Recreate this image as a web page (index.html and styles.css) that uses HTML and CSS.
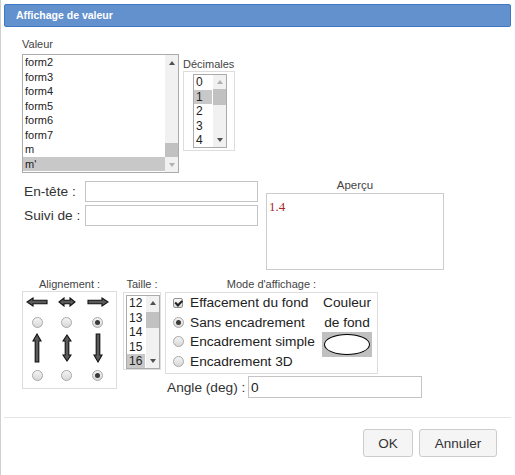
FILE: index.html
```html
<!DOCTYPE html>
<html>
  <head>
    <meta charset="utf-8">
    <title>Affichage de valeur</title>
    <link rel="stylesheet" href="styles.css">
  </head>

  <body>
    <div class="dialog">
      <!-- Title bar -->
      <div class="titlebar">Affichage de valeur</div>

      <div class="dialog-body">
        <!-- Value list + decimals -->
        <div class="row row-top">
          <div class="value-col">
            <div class="caption caption-left">Valeur</div>
            <div class="listbox value-list">
              <ul class="items">
                <li>form2</li>
                <li>form3</li>
                <li>form4</li>
                <li>form5</li>
                <li>form6</li>
                <li>form7</li>
                <li>m</li>
                <li class="selected">m'</li>
              </ul>
              <div class="scrollbar">
                <span class="arrow up"></span>
                <span class="track track-end"><span class="thumb"></span></span>
                <span class="arrow down faded"></span>
              </div>
            </div>
          </div>

          <div class="decimal-col">
            <div class="caption caption-left">Décimales</div>
            <div class="group decimal-box">
              <div class="listbox small-list decimal-list">
                <ul class="items">
                  <li>0</li>
                  <li class="selected">1</li>
                  <li>2</li>
                  <li>3</li>
                  <li>4</li>
                </ul>
                <div class="scrollbar">
                  <span class="arrow up faded"></span>
                  <span class="track"><span class="thumb"></span></span>
                  <span class="arrow down"></span>
                </div>
              </div>
            </div>
          </div>
        </div>

        <!-- Prefix / suffix + preview -->
        <div class="row row-text">
          <div class="fields">
            <div class="field">
              <label for="prefix">En-tête :</label>
              <input type="text" id="prefix">
            </div>
            <div class="field">
              <label for="suffix">Suivi de :</label>
              <input type="text" id="suffix">
            </div>
          </div>

          <div class="preview-col">
            <div class="caption">Aperçu</div>
            <div class="preview-box">
              <span class="preview-text">1.4</span>
            </div>
          </div>
        </div>

        <!-- Alignment, size, display mode -->
        <div class="row row-options">
          <div class="align-col">
            <div class="caption">Alignement :</div>
            <div class="group align-box">
              <div class="cell">
                <svg width="22" height="10" viewBox="0 0 22 10"><path class="arr" d="M1 5 L7 1 L7 3.2 L21 3.2 L21 6.8 L7 6.8 L7 9 Z"/></svg>
              </div>
              <div class="cell">
                <svg width="18" height="10" viewBox="0 0 18 10"><path class="arr" d="M1 5 L6 1 L6 3.2 L12 3.2 L12 1 L17 5 L12 9 L12 6.8 L6 6.8 L6 9 Z"/></svg>
              </div>
              <div class="cell">
                <svg width="22" height="10" viewBox="0 0 22 10"><path class="arr" d="M21 5 L15 1 L15 3.2 L1 3.2 L1 6.8 L15 6.8 L15 9 Z"/></svg>
              </div>

              <div class="cell"><span class="radio"></span></div>
              <div class="cell"><span class="radio"></span></div>
              <div class="cell"><span class="radio checked"></span></div>

              <div class="cell">
                <svg width="10" height="30" viewBox="0 0 10 30"><path class="arr" d="M5 1 L9 8 L6.8 8 L6.8 29 L3.2 29 L3.2 8 L1 8 Z"/></svg>
              </div>
              <div class="cell">
                <svg width="10" height="28" viewBox="0 0 10 28"><path class="arr" d="M5 1 L9 7 L6.8 7 L6.8 21 L9 21 L5 27 L1 21 L3.2 21 L3.2 7 L1 7 Z"/></svg>
              </div>
              <div class="cell">
                <svg width="10" height="30" viewBox="0 0 10 30"><path class="arr" d="M5 29 L9 22 L6.8 22 L6.8 1 L3.2 1 L3.2 22 L1 22 Z"/></svg>
              </div>

              <div class="cell"><span class="radio"></span></div>
              <div class="cell"><span class="radio"></span></div>
              <div class="cell"><span class="radio checked"></span></div>
            </div>
          </div>

          <div class="size-col">
            <div class="caption">Taille :</div>
            <div class="group size-box">
              <div class="listbox small-list size-list">
                <ul class="items">
                  <li>12</li>
                  <li>13</li>
                  <li>14</li>
                  <li>15</li>
                  <li class="selected">16</li>
                </ul>
                <div class="scrollbar">
                  <span class="arrow up"></span>
                  <span class="track"><span class="thumb"></span></span>
                  <span class="arrow down"></span>
                </div>
              </div>
            </div>
          </div>

          <div class="mode-col">
            <div class="caption">Mode d'affichage :</div>
            <div class="group mode-box">
              <div class="mode-options">
                <div class="option"><span class="checkbox checked"></span>Effacement du fond</div>
                <div class="option"><span class="radio checked"></span>Sans encadrement</div>
                <div class="option"><span class="radio"></span>Encadrement simple</div>
                <div class="option"><span class="radio"></span>Encadrement 3D</div>
              </div>
              <div class="bg-color">
                <div class="bg-label">Couleur<br>de fond</div>
                <div class="swatch"><span class="swatch-oval"></span></div>
              </div>
            </div>

            <div class="field angle-field">
              <label for="angle">Angle (deg) :</label>
              <input type="text" id="angle" value="0">
            </div>
          </div>
        </div>
      </div>

      <!-- Buttons -->
      <div class="dialog-footer">
        <button class="btn btn-ok">OK</button>
        <button class="btn">Annuler</button>
      </div>
    </div>
  </body>
</html>
```

FILE: styles.css
```css
/* Reset / Global */
* {
  margin: 0;
  padding: 0;
  box-sizing: border-box;
}

body {
  font-family: "Liberation Sans", Arial, sans-serif;
  background-color: #FFFFFF;
  color: #333333;
}

/* Dialog frame */
.dialog {
  width: 515px;
  height: 475px;
  display: flex;
  flex-direction: column;
  border-left: 1px solid #d0d0d0;
  background-color: #FFFFFF;
}

.titlebar {
  margin: 4px 4px 0 3px;
  height: 23px;
  padding-left: 11px;
  background-color: #6391ce;
  border: 1px solid #3f78c6;
  border-radius: 2px;
  color: #FFFFFF;
  font-weight: bold;
  font-size: 10.5px;
  line-height: 21px;
}

.dialog-body {
  padding: 10px 0 0 21px;
}

.row {
  display: flex;
  align-items: flex-start;
}

/* Small captions above each block */
.caption {
  font-size: 11px;
  line-height: 14px;
  color: #444444;
  text-align: center;
  white-space: nowrap;
}
.caption-left {
  text-align: left;
}

.group {
  border: 1px solid #dddddd;
}

/* List boxes => item column + fake scrollbar */
.listbox {
  display: flex;
  border: 1px solid #ababab;
  background-color: #FFFFFF;
  overflow: hidden;
}
.items {
  list-style-type: none;
  flex: 1;
  font-size: 11px;
  line-height: 14.5px;
  color: #222222;
}
.items li {
  padding-left: 2px;
  white-space: nowrap;
}
.items li.selected {
  background-color: #c8c8c8;
}

.scrollbar {
  width: 13px;
  display: flex;
  flex-direction: column;
  background-color: #f1f1f1;
}
.arrow {
  height: 15px;
  display: flex;
  align-items: center;
  justify-content: center;
}
.arrow::before {
  content: "";
  width: 0;
  height: 0;
  border-left: 3.5px solid transparent;
  border-right: 3.5px solid transparent;
}
.arrow.up::before {
  border-bottom: 4px solid #505050;
}
.arrow.down::before {
  border-top: 4px solid #505050;
}
.arrow.up.faded::before {
  border-bottom-color: #b0b0b0;
}
.arrow.down.faded::before {
  border-top-color: #b0b0b0;
}
.track {
  flex: 1;
  display: flex;
  flex-direction: column;
}
.track-end {
  justify-content: flex-end;
}
.thumb {
  height: 14px;
  background-color: #c1c1c1;
}

/* Value list */
.value-col .caption {
  margin-bottom: 3px;
}
.value-list {
  width: 157px;
  height: 119px;
}

/* Decimals */
.decimal-col {
  margin-left: 4px;
  margin-top: 20px;
}
.decimal-box {
  width: 52px;
  height: 80px;
  padding: 2px 0 0 9px;
}
.small-list .items {
  font-size: 12px;
  line-height: 14.5px;
}
.small-list .scrollbar {
  width: 13px;
}
.small-list .arrow {
  height: 14px;
}
.small-list .thumb {
  height: 16px;
}
.decimal-list {
  width: 34px;
  height: 74px;
}
.decimal-list .items li.selected {
  margin-right: 1px;
}

/* Prefix / suffix fields */
.row-text {
  margin-top: 5px;
}
.fields {
  margin-top: 3px;
}
.field {
  display: flex;
  align-items: center;
}
.field + .field {
  margin-top: 3px;
}
.field label {
  width: 63px;
  padding-left: 2px;
  font-size: 13.7px;
  color: #333333;
  white-space: nowrap;
}
input[type="text"] {
  width: 173px;
  height: 21px;
  border: 1px solid #c4c4c4;
  padding: 0 2px;
  font-family: "Liberation Sans", Arial, sans-serif;
  font-size: 13.7px;
  color: #222222;
}

/* Preview */
.preview-col {
  margin-left: 8px;
  width: 178px;
}
.preview-col .caption {
  font-size: 11.5px;
  margin-bottom: 1px;
}
.preview-box {
  height: 77px;
  border: 1px solid #cccccc;
  padding: 3px 2px;
}
.preview-text {
  font-family: "Liberation Serif", "Times New Roman", serif;
  font-size: 13px;
  line-height: 16px;
  color: #a52a2a;
}

/* Options row */
.row-options {
  margin-top: 7px;
}

.align-col {
  width: 95px;
}
.align-box {
  height: 98px;
  display: grid;
  grid-template-columns: 28px 31px 31px;
  grid-template-rows: 20px 20px 31px 25px;
}
.cell {
  display: flex;
  align-items: center;
  justify-content: center;
}
.arr {
  fill: #5a5a5a;
  stroke: #111111;
  stroke-width: 1.1;
  stroke-linejoin: miter;
}

/* Radio / checkbox look-alikes */
.radio {
  display: inline-flex;
  align-items: center;
  justify-content: center;
  width: 11px;
  height: 11px;
  border-radius: 50%;
  border: 1px solid #a8a8a8;
  background: linear-gradient(#f4f4f4, #d8d8d8);
}
.radio.checked::after {
  content: "";
  width: 5px;
  height: 5px;
  border-radius: 50%;
  background-color: #3a3a3a;
}
.checkbox {
  display: inline-flex;
  align-items: center;
  justify-content: center;
  width: 10px;
  height: 10px;
  border: 1px solid #8f8f8f;
  border-radius: 2px;
  background: linear-gradient(#fafafa, #dedede);
}
.checkbox.checked::after {
  content: "";
  width: 5px;
  height: 2.5px;
  border-left: 2px solid #222222;
  border-bottom: 2px solid #222222;
  transform: translateY(-1px) rotate(-45deg);
}

/* Font size list */
.size-col {
  margin-left: 6px;
  width: 38px;
}
.size-col .caption {
  margin-bottom: 1px;
}
.size-box {
  height: 78px;
  padding: 2px 1px 0 2px;
}
.size-list {
  width: 34px;
  height: 74px;
}
.size-list .items li.selected {
  margin-right: 1px;
}
.size-list .track {
  padding-top: 2px;
}

/* Display mode */
.mode-col {
  margin-left: 4px;
  display: flex;
  flex-direction: column;
  align-items: flex-start;
}
.mode-col .caption {
  width: 213px;
  margin-bottom: 1px;
}
.mode-box {
  width: 213px;
  height: 82px;
  display: flex;
  justify-content: space-between;
  padding: 0 5px 0 7px;
  font-size: 13.7px;
  line-height: 19.5px;
  color: #222222;
}
.option {
  display: flex;
  align-items: center;
  white-space: nowrap;
}
.option .radio,
.option .checkbox {
  margin-right: 6px;
}
.option .checkbox {
  margin-right: 7px;
}
.bg-color {
  width: 50px;
  text-align: center;
}
.swatch {
  height: 25px;
  padding: 2px;
  background-color: #c0c0c0;
}
.swatch-oval {
  display: block;
  height: 100%;
  border: 1px solid #000000;
  border-radius: 50%;
  background-color: #FFFFFF;
}

.angle-field {
  margin-top: 2px;
}
.angle-field label {
  width: 83px;
}
.angle-field input[type="text"] {
  width: 174px;
  height: 22px;
}

/* Footer => separator + buttons on the right */
.dialog-footer {
  margin: auto 4px 0 3px;
  border-top: 1px solid #e5e5e5;
  padding: 11px 14px 18px 0;
  display: flex;
  justify-content: flex-end;
  gap: 6px;
}
.btn {
  height: 28px;
  padding: 0 14px;
  border: 1px solid #cccccc;
  border-radius: 3px;
  background-color: #f5f5f5;
  color: #333333;
  font-family: "Liberation Sans", Arial, sans-serif;
  font-size: 13.5px;
}
.btn-ok {
  width: 50px;
  padding: 0;
}
.btn:not(.btn-ok) {
  width: 78px;
  padding: 0;
}
```
